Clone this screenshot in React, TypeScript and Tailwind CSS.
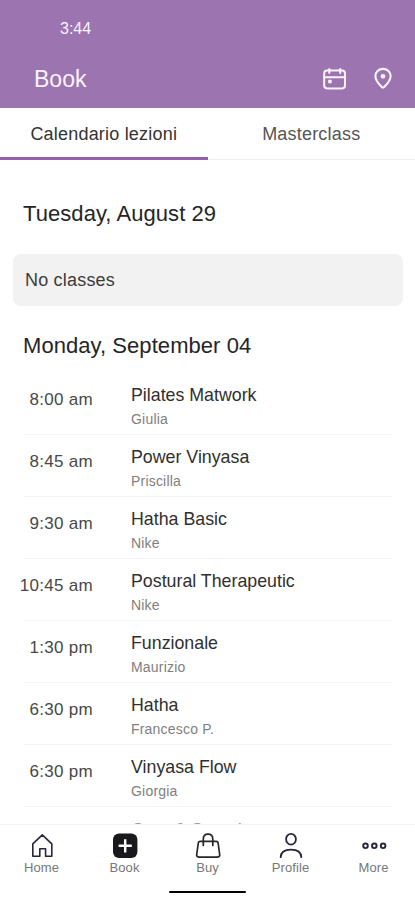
const classes = [
  { time: "8:00 am", name: "Pilates Matwork", teacher: "Giulia" },
  { time: "8:45 am", name: "Power Vinyasa", teacher: "Priscilla" },
  { time: "9:30 am", name: "Hatha Basic", teacher: "Nike" },
  { time: "10:45 am", name: "Postural Therapeutic", teacher: "Nike" },
  { time: "1:30 pm", name: "Funzionale", teacher: "Maurizio" },
  { time: "6:30 pm", name: "Hatha", teacher: "Francesco P." },
  { time: "6:30 pm", name: "Vinyasa Flow", teacher: "Giorgia" },
];

function Header() {
  return (
    <header className="h-[108px] shrink-0 bg-[#9b74b0] text-[#fbf3ff]">
      <div className="pt-[19px] pl-[60px] text-[16px] leading-5">3:44</div>
      <div className="mt-[26px] flex h-7 items-center pr-[22px] pl-[34px]">
        <h1 className="text-[23px] leading-7">Book</h1>
        <svg className="ml-auto" width="24" height="24" viewBox="0 0 24 24" fill="none" stroke="currentColor" strokeWidth="2" strokeLinecap="round">
          <rect x="1.2" y="3.6" width="20.8" height="17.8" rx="2.8" />
          <path d="M1.2 10.3h20.8M6.3 2v4M17.2 2v4" />
          <rect x="5.2" y="12.8" width="3.4" height="3.4" rx="0.5" fill="currentColor" stroke="none" />
        </svg>
        <svg className="ml-[26px]" width="20" height="24" viewBox="0 0 20 24" fill="none" stroke="currentColor" strokeWidth="2.1">
          <path d="M10 1.9c-4.5 0-7.6 3.2-7.6 7.4 0 4.5 3.9 8.2 6.4 10.8.7.7 1.7.7 2.4 0 2.5-2.6 6.4-6.3 6.4-10.8 0-4.2-3.1-7.4-7.6-7.4Z" />
          <circle cx="10" cy="9.3" r="2.4" fill="currentColor" stroke="none" />
        </svg>
      </div>
    </header>
  );
}

function Tabs() {
  return (
    <div className="grid h-[52px] shrink-0 grid-cols-2 text-center text-[18px] leading-[52px] tracking-[0.2px]">
      <div className="h-[52px] border-b-[3px] border-[#9360ac] text-[#333]">Calendario lezioni</div>
      <div className="h-[52px] border-b border-[#eee] text-[#555]">Masterclass</div>
    </div>
  );
}

function ClassRow({ time, name, teacher }: { time: string; name: string; teacher: string }) {
  return (
    <li className="mr-[22px] ml-[23px] flex h-[62px] border-b border-[#f3f3f3]">
      <span className="-ml-[10px] w-20 shrink-0 pt-[17px] text-right text-[17px] leading-5 tracking-[0.3px] whitespace-nowrap text-[#484848]">{time}</span>
      <div className="pt-3 pl-[38px]">
        <p className="text-[17.8px] leading-5 text-[#303030]">{name}</p>
        <p className="mt-[5px] text-[14px] leading-[18px] tracking-[0.2px] text-[#808080]">{teacher}</p>
      </div>
    </li>
  );
}

function HomeIcon() {
  return (
    <svg width="28" height="28" viewBox="0 0 28 28" fill="none" stroke="#28263a" strokeWidth="1.6" strokeLinejoin="round">
      <path d="M4.8 11.8 14.3 2.8l9.5 9v12.4h-6.2v-7.4h-5.8v7.4h-7Z" />
    </svg>
  );
}

function BookIcon() {
  return (
    <svg width="28" height="28" viewBox="0 0 28 28" fill="none">
      <rect x="2" y="1.6" width="24.4" height="24.4" rx="6" fill="#19181c" />
      <path d="M14.2 7.2v13.2M7.6 13.8h13.2" stroke="white" strokeWidth="2.4" />
    </svg>
  );
}

function BuyIcon() {
  return (
    <svg width="28" height="28" viewBox="0 0 28 28" fill="none" stroke="#28262d" strokeWidth="1.7" strokeLinecap="round" strokeLinejoin="round">
      <path d="M6.2 9.4h16c1 0 1.7.6 1.9 1.6l1.6 11.5c.2 1.6-.8 2.6-2.4 2.6H5.1c-1.6 0-2.6-1-2.4-2.6L4.3 11c.2-1 .9-1.6 1.9-1.6Z" />
      <path d="M9.3 13.5V7c0-3 1.8-4.8 4.7-4.8S18.8 4 18.8 7v6.5" />
    </svg>
  );
}

function ProfileIcon() {
  return (
    <svg width="28" height="28" viewBox="0 0 28 28" fill="none" stroke="#28263a" strokeWidth="1.8" strokeLinecap="round">
      <ellipse cx="14" cy="7.2" rx="4.9" ry="5.4" />
      <path d="M3.7 25.2c.2-5 4.2-7.6 10.3-7.6s10.1 2.6 10.3 7.6" />
    </svg>
  );
}

function MoreIcon() {
  return (
    <svg width="28" height="28" viewBox="0 0 28 28" fill="none" stroke="#28263a" strokeWidth="1.9">
      <circle cx="5.5" cy="13.8" r="2.3" />
      <circle cx="14.3" cy="13.8" r="2.3" />
      <circle cx="23.1" cy="13.8" r="2.3" />
    </svg>
  );
}

const navItems = [
  { label: "Home", Icon: HomeIcon },
  { label: "Book", Icon: BookIcon },
  { label: "Buy", Icon: BuyIcon },
  { label: "Profile", Icon: ProfileIcon },
  { label: "More", Icon: MoreIcon },
];

function BottomNav() {
  return (
    <nav className="h-[76px] shrink-0 border-t border-[#f3f3f3] bg-white">
      <div className="grid grid-cols-5 pt-[7px]">
        {navItems.map(({ label, Icon }) => (
          <div key={label} className="flex flex-col items-center">
            <Icon />
            <span className="text-[13px] leading-4 tracking-[0.1px] text-[#777]">{label}</span>
          </div>
        ))}
      </div>
      <div className="mx-auto mt-[15px] h-[2px] w-[77px] rounded-full bg-black" />
    </nav>
  );
}

export default function App() {
  return (
    <div className="flex h-[900px] w-[415px] flex-col overflow-hidden bg-white font-['Liberation_Sans',sans-serif]">
      <Header />
      <Tabs />
      <main className="min-h-0 flex-1 overflow-hidden">
        <h2 className="mt-10 ml-[23px] text-[22px] leading-7 tracking-[0.06px] text-[#252525]">Tuesday, August 29</h2>
        <div className="mt-[26px] mr-3 ml-[13px] flex h-[52px] items-center rounded-lg bg-[#f2f2f2] pl-3 text-[18px] tracking-[0.2px] text-[#3c3c3c]">
          No classes
        </div>
        <h2 className="mt-[26px] ml-[23px] text-[22px] leading-7 tracking-[0.06px] text-[#252525]">Monday, September 04</h2>
        <ul className="mt-[13px]">
          {classes.map((item) => (
            <ClassRow key={item.name} {...item} />
          ))}
          {/* Next class, mostly behind the bottom nav */}
          <li className="pt-[13px] pl-[131px] text-[17.8px] leading-5 text-[#999]">Core &amp; Stretch</li>
        </ul>
      </main>
      <BottomNav />
    </div>
  );
}
